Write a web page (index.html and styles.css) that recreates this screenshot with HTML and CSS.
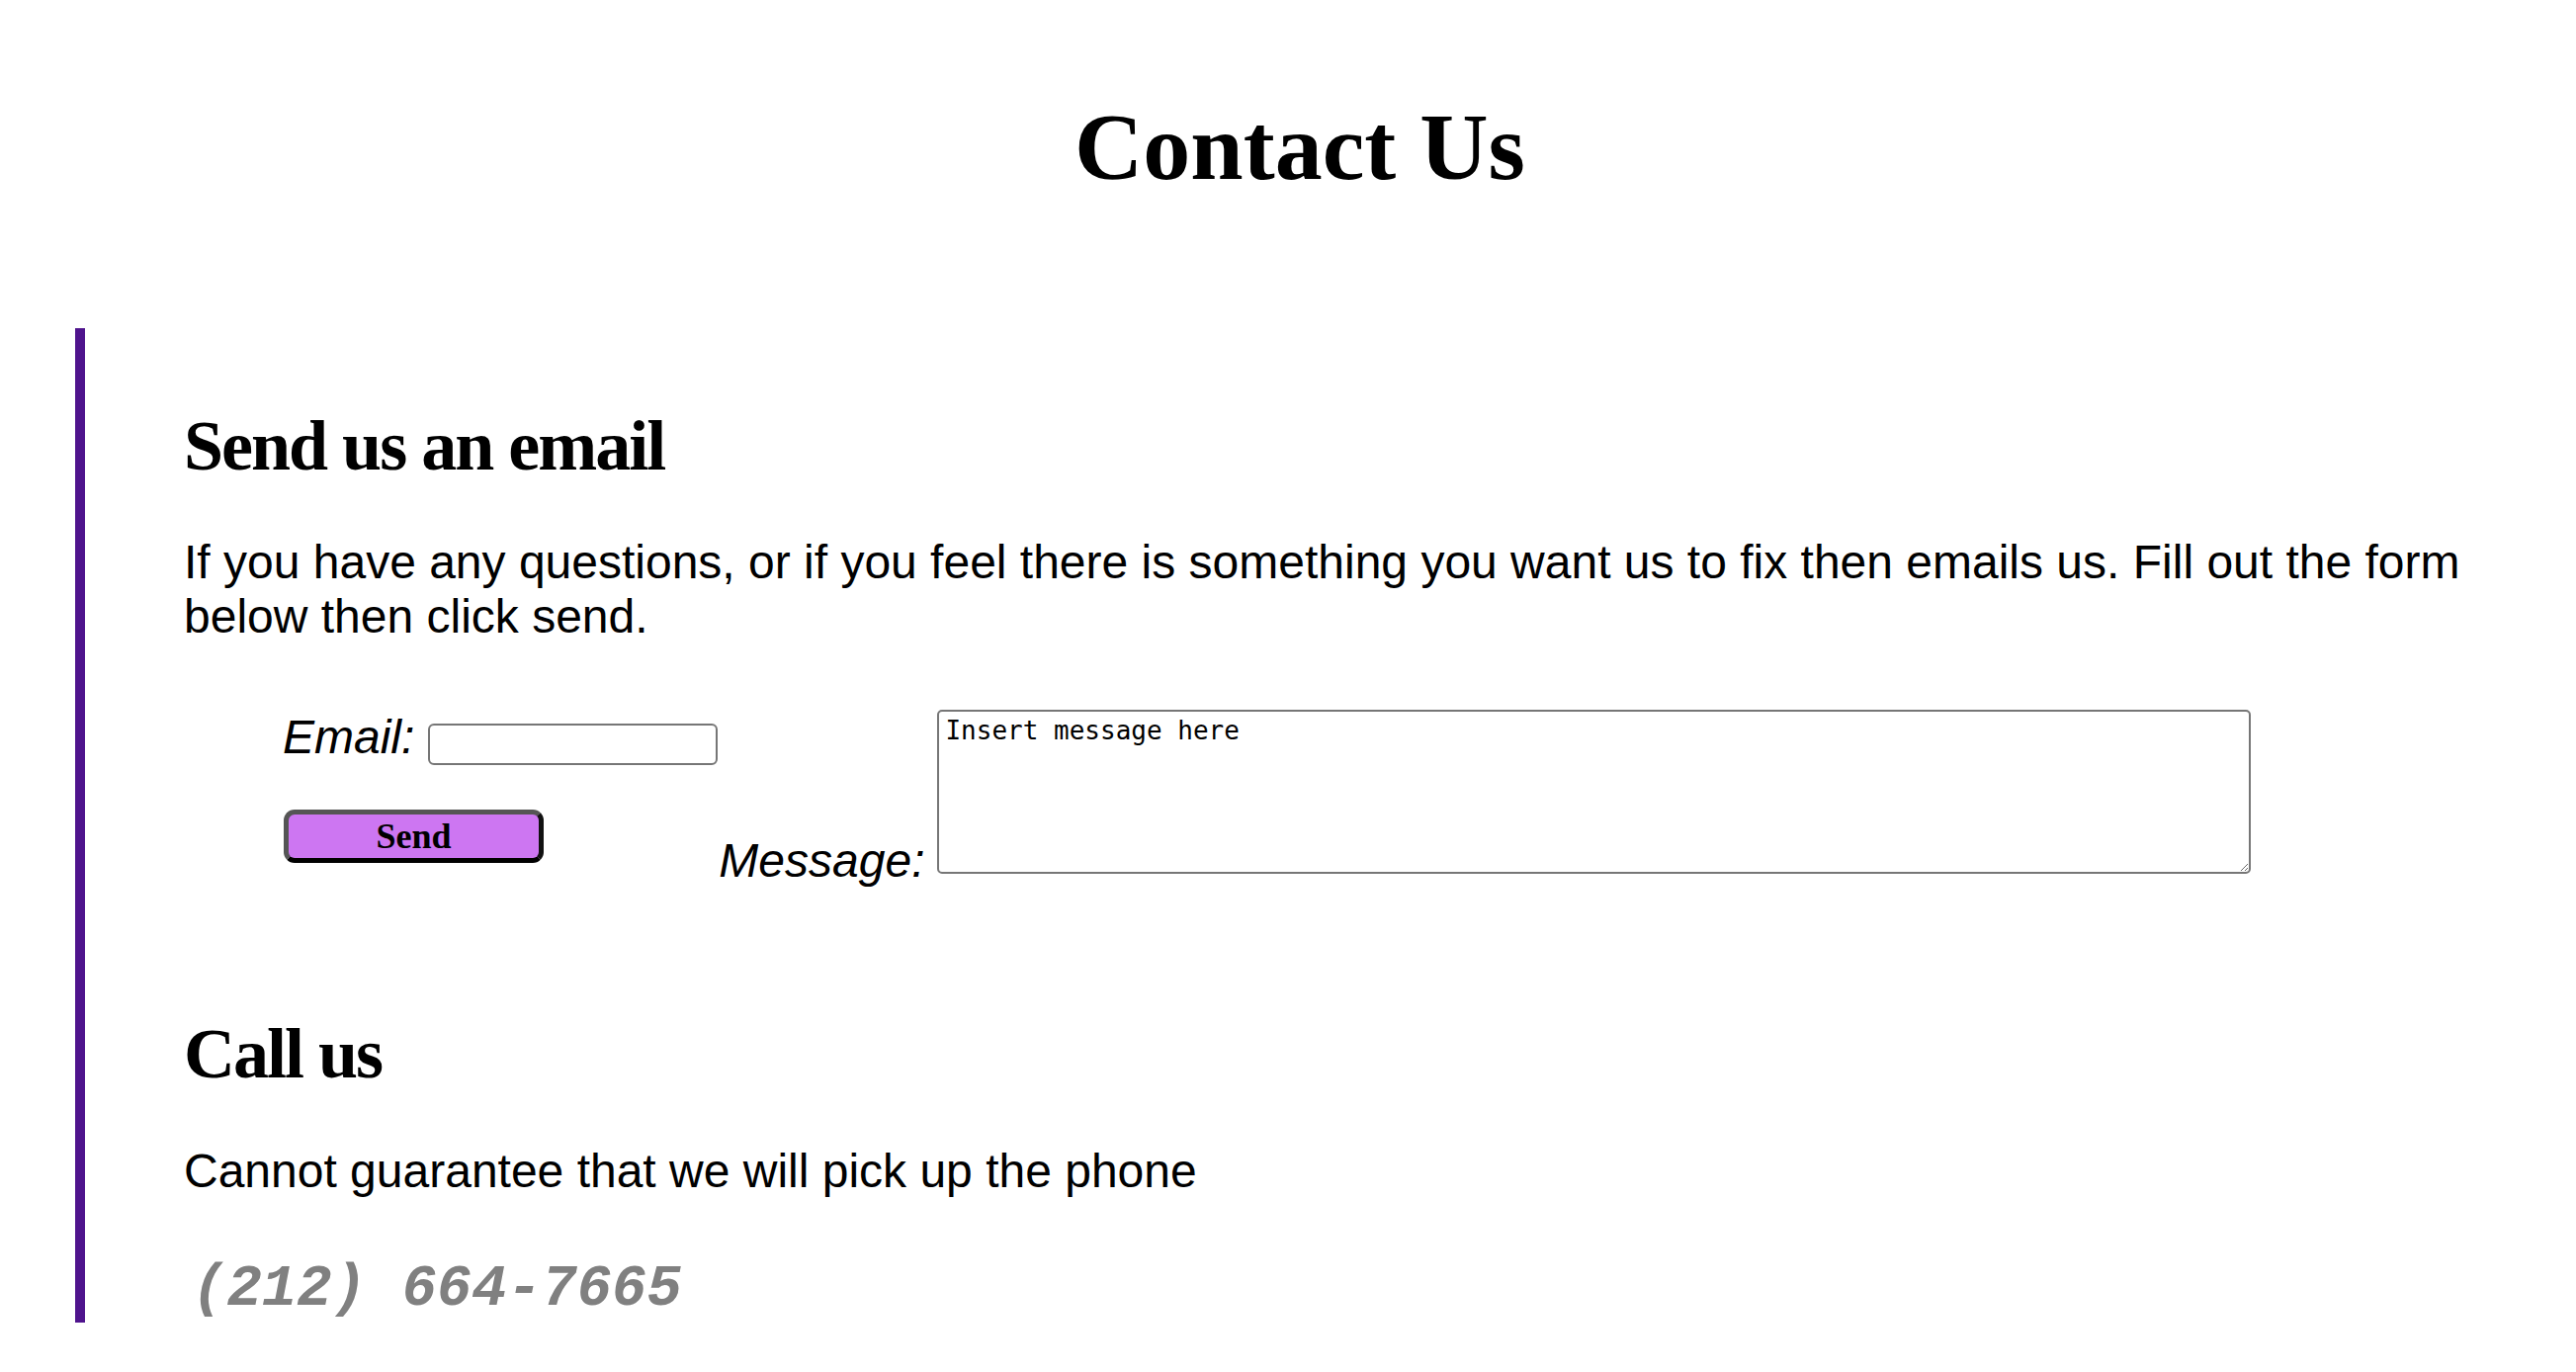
FILE: index.html
```html
<!DOCTYPE html>
<html lang="en">
<head>
<meta charset="utf-8">
<title>Contact Us</title>
<link rel="stylesheet" href="styles.css">
</head>
<body>
<h1 class="title">Contact Us</h1>
<section class="panel">
  <h2 class="heading">Send us an email</h2>
  <p class="text">If you have any questions, or if you feel there is something you want us to fix then emails us. Fill out the form below then click send.</p>
  <form class="form">
    <div class="form-left">
      <div class="email-row">
        <label class="label" for="email">Email:</label>
        <input class="email-input" id="email" type="email">
      </div>
      <button class="send" type="button">Send</button>
    </div>
    <div class="message-group">
      <label class="label message-label" for="msg">Message:</label>
      <textarea class="message" id="msg">Insert message here</textarea>
    </div>
  </form>
  <h2 class="heading heading-call">Call us</h2>
  <p class="text text-call">Cannot guarantee that we will pick up the phone</p>
  <div class="phone">(212) 664-7665</div>
</section>
</body>
</html>
```
FILE: styles.css
```css
html, body {
  margin: 0;
  padding: 0;
  background: #ffffff;
}

body {
  font-family: "Liberation Sans", Arial, sans-serif;
  font-size: 48px;
  color: #000000;
  padding-bottom: 48px;
}

.title {
  margin: 0;
  padding: 94px 0 0 24px;
  text-align: center;
  font-family: "Liberation Serif", serif;
  font-weight: bold;
  font-size: 96px;
  line-height: 110px;
}

.panel {
  margin: 128px 76px 0 76px;
  border-left: 10px solid #4f148d;
  padding: 78px 0 0 100px;
}

.heading {
  margin: 0;
  font-family: "Liberation Serif", serif;
  font-weight: bold;
  font-size: 72px;
  line-height: 82px;
  letter-spacing: -2px;
}

.text {
  margin: 49px 0 0 0;
  font-size: 48px;
  line-height: 55px;
}

.form {
  margin: 67px 0 0 0;
  padding-left: 100px;
  display: flex;
  align-items: flex-start;
}

.form-left {
  display: flex;
  flex-direction: column;
  align-items: flex-start;
}

.email-row {
  display: flex;
  align-items: flex-start;
  gap: 14px;
}

.label {
  font-style: italic;
  font-size: 48px;
  line-height: 55px;
}

.email-input {
  margin: 14px 0 0 0;
  width: 293px;
  height: 42px;
  box-sizing: border-box;
  border: 2px solid #767676;
  border-radius: 6px;
  background: #ffffff;
  padding: 2px 6px;
  font-size: 26px;
}

.send {
  margin: 45px 0 0 1px;
  width: 263px;
  height: 54px;
  box-sizing: border-box;
  background: #cd76f2;
  border-style: solid;
  border-width: 5px;
  border-color: #555555 #111111 #000000 #555555;
  border-radius: 11px;
  font-family: "Liberation Serif", serif;
  font-weight: bold;
  font-size: 36px;
  line-height: 1;
  color: #000000;
  padding: 0;
}

.message-group {
  display: flex;
  align-items: flex-end;
  gap: 13px;
  margin-left: 1px;
}

.message-label {
  margin-bottom: -14px;
}

.message {
  width: 1329px;
  height: 166px;
  box-sizing: border-box;
  margin: 0;
  border: 2px solid #767676;
  border-radius: 5px;
  padding: 4px 6px;
  font-family: "DejaVu Sans Mono", monospace;
  font-size: 26px;
  line-height: 30px;
  color: #000000;
  background: #ffffff;
}

.heading-call {
  margin-top: 141px;
}

.text-call {
  margin-top: 50px;
}

.phone {
  margin: 60px 0 0 8px;
  font-family: "Liberation Mono", "Courier New", monospace;
  font-weight: bold;
  font-style: italic;
  font-size: 59px;
  line-height: 66px;
  color: #808080;
}
```
